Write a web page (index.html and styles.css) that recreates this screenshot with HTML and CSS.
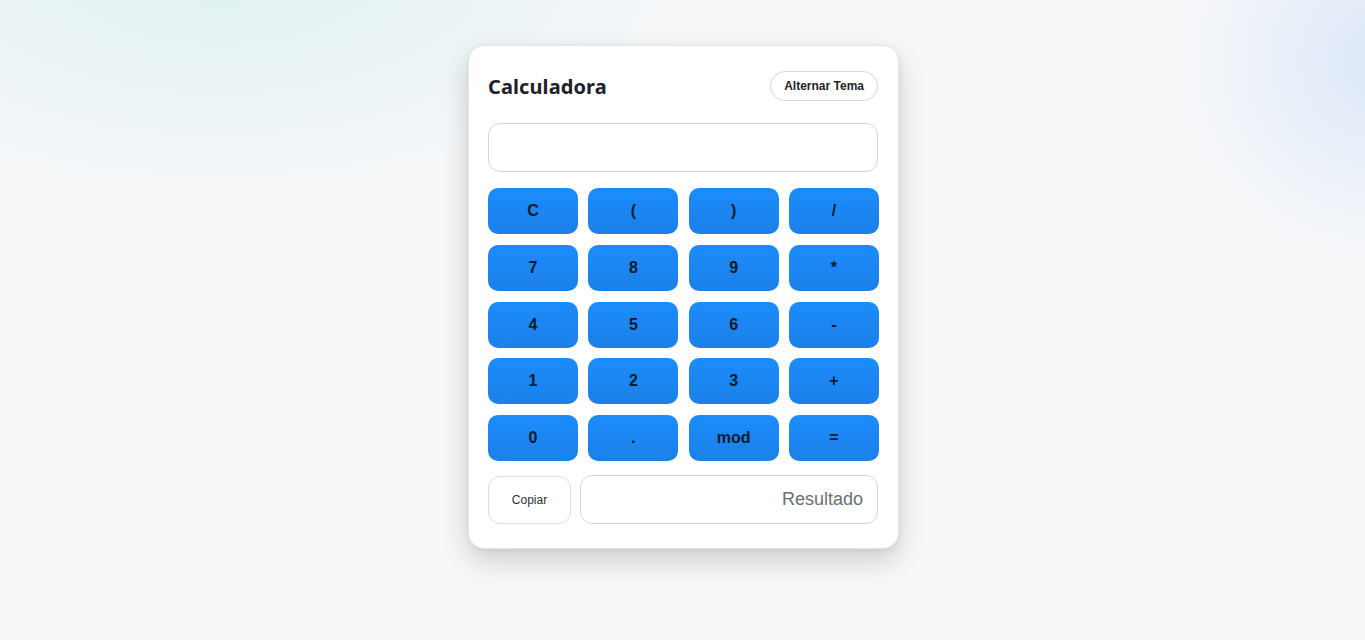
FILE: index.html
```html
<!DOCTYPE html>
<html lang="pt">
<head>
<meta charset="utf-8">
<title>Calculadora</title>
<link rel="stylesheet" href="styles.css">
</head>
<body>
<main class="page">
  <section class="card">
    <header class="header">
      <h1 class="title">Calculadora</h1>
      <button class="theme-btn">Alternar Tema</button>
    </header>
    <input class="display" type="text" value="">
    <div class="keys">
      <button class="key">C</button>
      <button class="key">(</button>
      <button class="key">)</button>
      <button class="key">/</button>
      <button class="key">7</button>
      <button class="key">8</button>
      <button class="key">9</button>
      <button class="key">*</button>
      <button class="key">4</button>
      <button class="key">5</button>
      <button class="key">6</button>
      <button class="key">-</button>
      <button class="key">1</button>
      <button class="key">2</button>
      <button class="key">3</button>
      <button class="key">+</button>
      <button class="key">0</button>
      <button class="key">.</button>
      <button class="key">mod</button>
      <button class="key">=</button>
    </div>
    <div class="bottom">
      <button class="copy-btn">Copiar</button>
      <input class="result" type="text" placeholder="Resultado" readonly>
    </div>
  </section>
</main>
</body>
</html>
```
FILE: styles.css
```css
* { box-sizing: border-box; }
html, body { margin: 0; height: 100%; }
body {
  font-family: "Liberation Sans", Arial, sans-serif;
  background-color: #f6f7f9;
  background-image:
    radial-gradient(ellipse 480px 240px at 220px -40px, rgba(214, 238, 238, 0.75), rgba(214, 238, 238, 0) 100%),
    radial-gradient(circle 200px at 1380px 60px, rgba(219, 232, 248, 0.95), rgba(219, 232, 248, 0) 100%);
  background-repeat: no-repeat;
}
.page {
  display: flex;
  justify-content: center;
  padding-top: 45px;
  padding-left: 2px;
}
.card {
  width: 431px;
  background: #fff;
  border: 1px solid #e2e4e8;
  border-radius: 16px;
  box-shadow: 0 12px 28px rgba(0, 0, 0, 0.16), 0 2px 6px rgba(0, 0, 0, 0.06);
  padding: 24px 19px 24px 19px;
}
.header {
  display: flex;
  justify-content: space-between;
  align-items: center;
  height: 32px;
  margin-right: 1px;
}
.title {
  margin: 0;
  font-family: "Noto Sans", "Open Sans", sans-serif;
  font-weight: 700;
  font-size: 20px;
  color: #1d2128;
  letter-spacing: 0.1px;
}
.theme-btn {
  height: 30px;
  padding: 0 13px;
  border: 1px solid #d4d7dc;
  border-radius: 15px;
  background: #fff;
  font-family: "Liberation Sans", Arial, sans-serif;
  font-weight: 700;
  font-size: 12px;
  color: #1f2329;
}
.display {
  display: block;
  width: 390px;
  height: 49px;
  margin-top: 21px;
  border: 1px solid #d3d6db;
  border-radius: 12px;
  background: #fff;
  font-size: 18px;
  padding: 0 16px;
  outline: none;
}
.keys {
  display: grid;
  grid-template-columns: repeat(4, 90px);
  column-gap: 10.33px;
  row-gap: 10.75px;
  margin-top: 16px;
  width: 391px;
}
.key {
  height: 46px;
  border: none;
  border-radius: 10px;
  background: linear-gradient(180deg, #1b8cfd 0%, #1c80e8 100%);
  font-family: "Liberation Sans", Arial, sans-serif;
  font-weight: 700;
  font-size: 16px;
  color: #111a2b;
  padding: 0;
}
.bottom {
  display: flex;
  align-items: center;
  gap: 9px;
  margin-top: 14px;
}
.copy-btn {
  width: 83px;
  height: 48px;
  border: 1px solid #d9dce0;
  border-radius: 12px;
  background: #fff;
  font-family: "Liberation Sans", Arial, sans-serif;
  font-size: 12px;
  color: #2d3138;
  padding: 0;
}
.result {
  width: 298px;
  height: 49px;
  border: 1px solid #d3d6db;
  border-radius: 12px;
  background: #fff;
  text-align: right;
  font-family: "Liberation Sans", Arial, sans-serif;
  font-size: 18px;
  padding: 0 14px;
  outline: none;
}
.result::placeholder { color: #6b7076; }
```
